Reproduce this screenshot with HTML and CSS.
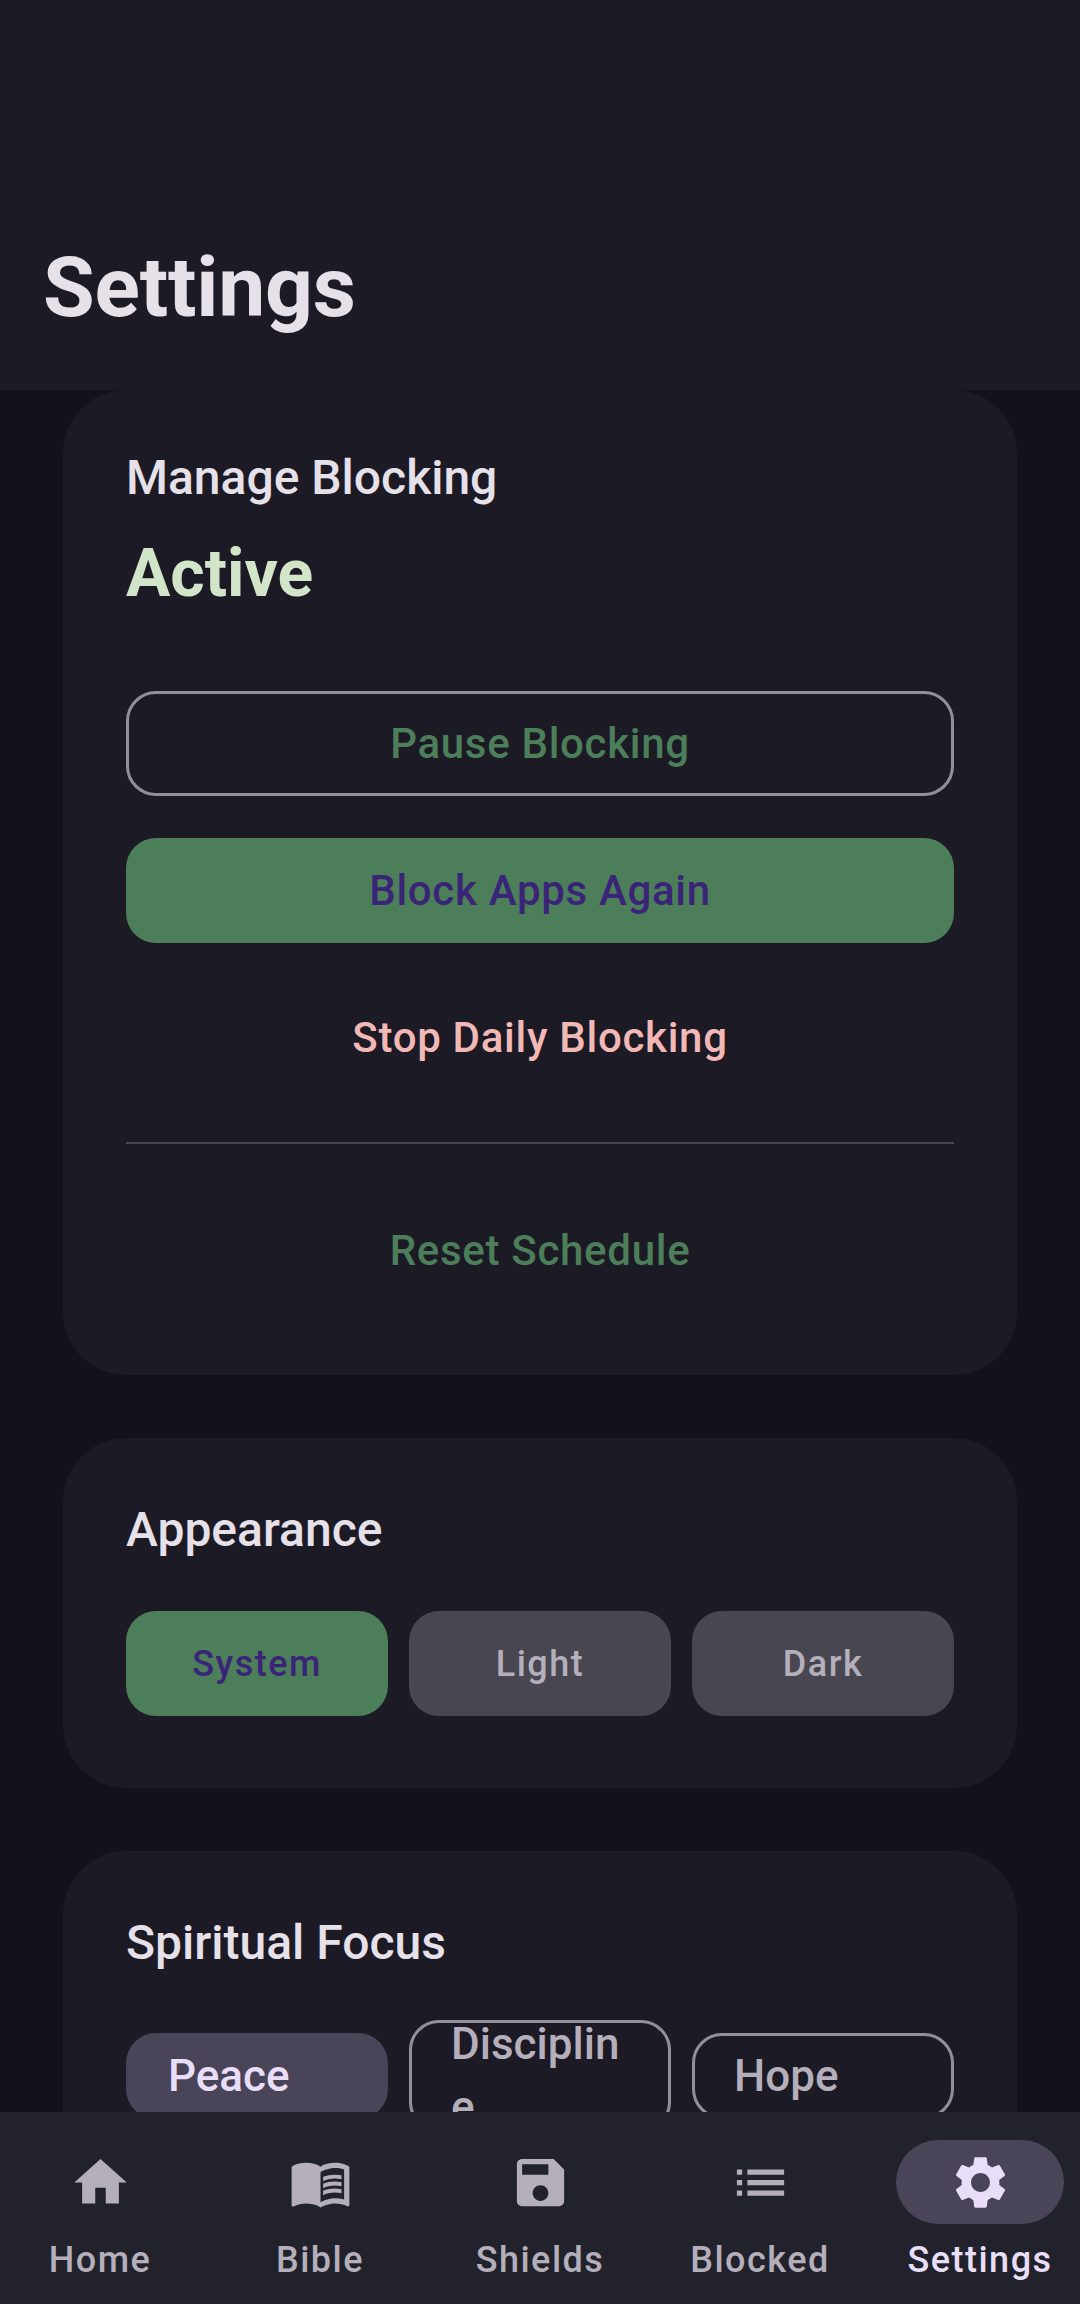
FILE: index.html
```html
<!DOCTYPE html>
<html lang="en">
<head>
  <meta charset="UTF-8" />
  <title>Settings</title>
  <link rel="stylesheet" href="styles.css">
</head>
<body>
  <div class="screen">
    <header class="top-bar">
      <h1>Settings</h1>
    </header>

    <main class="content">
      <section class="card card-manage">
        <h2>Manage Blocking</h2>
        <div class="status">Active</div>
        <button class="btn btn-outline">Pause Blocking</button>
        <button class="btn btn-filled">Block Apps Again</button>
        <button class="btn btn-text btn-danger">Stop Daily Blocking</button>
        <div class="divider"></div>
        <button class="btn btn-text btn-green">Reset Schedule</button>
      </section>

      <section class="card card-appearance">
        <h2>Appearance</h2>
        <div class="segments">
          <button class="seg seg-on">System</button>
          <button class="seg">Light</button>
          <button class="seg">Dark</button>
        </div>
      </section>

      <section class="card card-focus">
        <h2>Spiritual Focus</h2>
        <div class="chips">
          <div class="chip chip-on">Peace</div>
          <div class="chip chip-wrap"><div>Disciplin<br>e</div></div>
          <div class="chip">Hope</div>
        </div>
      </section>
    </main>

    <nav class="bottom-nav">
      <div class="nav-item">
        <div class="nav-icon">
          <svg viewBox="0 0 24 24" width="63" height="63"><path d="M10 20v-6h4v6h5v-8h3L12 3 2 12h3v8z"/></svg>
        </div>
        <span>Home</span>
      </div>
      <div class="nav-item">
        <div class="nav-icon">
          <svg viewBox="0 0 24 24" width="63" height="63"><path d="M21 5c-1.11-.35-2.33-.5-3.5-.5-1.95 0-4.05.4-5.5 1.5-1.45-1.1-3.55-1.5-5.5-1.5S2.45 4.9 1 6v14.65c0 .25.25.5.5.5.1 0 .15-.05.25-.05C3.1 20.45 5.05 20 6.5 20c1.95 0 4.05.4 5.5 1.5 1.35-.85 3.8-1.5 5.5-1.5 1.65 0 3.35.3 4.75 1.05.1.05.15.05.25.05.25 0 .5-.25.5-.5V6c-.6-.45-1.25-.75-2-1zm0 13.5c-1.1-.35-2.3-.5-3.5-.5-1.7 0-4.15.65-5.5 1.5V8c1.35-.85 3.8-1.5 5.5-1.5 1.2 0 2.4.15 3.5.5v11.5z"/><path d="M17.5 10.5c.88 0 1.73.09 2.5.26V9.24c-.79-.15-1.64-.24-2.5-.24-1.7 0-3.24.29-4.5.83v1.66c1.13-.64 2.7-.99 4.5-.99zM13 12.49v1.66c1.13-.64 2.7-.99 4.5-.99.88 0 1.73.09 2.5.26V11.9c-.79-.15-1.64-.24-2.5-.24-1.7 0-3.24.3-4.5.83zM17.5 14.33c-1.7 0-3.24.29-4.5.83v1.66c1.13-.64 2.7-.99 4.5-.99.88 0 1.73.09 2.5.26v-1.52c-.79-.16-1.64-.24-2.5-.24z"/></svg>
        </div>
        <span>Bible</span>
      </div>
      <div class="nav-item">
        <div class="nav-icon">
          <svg viewBox="0 0 24 24" width="63" height="63"><path d="M17 3H5c-1.11 0-2 .9-2 2v14c0 1.1.89 2 2 2h14c1.1 0 2-.9 2-2V7l-4-4zm-5 16c-1.66 0-3-1.34-3-3s1.34-3 3-3 3 1.34 3 3-1.34 3-3 3zm3-10H5V5h10v4z"/></svg>
        </div>
        <span>Shields</span>
      </div>
      <div class="nav-item">
        <div class="nav-icon">
          <svg viewBox="0 0 24 24" width="63" height="63"><path d="M3 13h2v-2H3v2zm0 4h2v-2H3v2zm0-8h2V7H3v2zm4 4h14v-2H7v2zm0 4h14v-2H7v2zM7 7v2h14V7H7z"/></svg>
        </div>
        <span>Blocked</span>
      </div>
      <div class="nav-item nav-on">
        <div class="nav-icon">
          <svg viewBox="0 0 24 24" width="63" height="63"><path d="M19.14 12.94c.04-.3.06-.61.06-.94 0-.32-.02-.64-.07-.94l2.03-1.58c.18-.14.23-.41.12-.61l-1.92-3.32c-.12-.22-.37-.29-.59-.22l-2.39.96c-.5-.38-1.03-.7-1.62-.94l-.36-2.54c-.04-.24-.24-.41-.48-.41h-3.84c-.24 0-.43.17-.47.41l-.36 2.54c-.59.24-1.13.57-1.62.94l-2.39-.96c-.22-.08-.47 0-.59.22L2.74 8.87c-.12.21-.08.47.12.61l2.03 1.58c-.05.3-.09.63-.09.94s.02.64.07.94l-2.03 1.58c-.18.14-.23.41-.12.61l1.92 3.32c.12.22.37.29.59.22l2.39-.96c.5.38 1.03.7 1.62.94l.36 2.54c.05.24.24.41.48.41h3.84c.24 0 .44-.17.47-.41l.36-2.54c.59-.24 1.13-.56 1.62-.94l2.39.96c.22.08.47 0 .59-.22l1.92-3.32c.12-.22.07-.47-.12-.61l-2.01-1.58zM12 15.6c-1.98 0-3.6-1.62-3.6-3.6s1.62-3.6 3.6-3.6 3.6 1.62 3.6 3.6-1.62 3.6-3.6 3.6z"/></svg>
        </div>
        <span>Settings</span>
      </div>
    </nav>
  </div>
</body>
</html>
```

FILE: styles.css
```css
* {
  box-sizing: border-box;
}

html, body {
  margin: 0;
  padding: 0;
}

body {
  background-color: #13121a;
  font-family: Roboto, "Noto Sans", sans-serif;
  color: #e6e0e9;
}

.screen {
  width: 1080px;
  height: 2304px;
  display: flex;
  flex-direction: column;
  overflow: hidden;
}

.top-bar {
  height: 390px;
  flex: none;
  background-color: #1b1a25;
  padding: 240px 43px 0;
}

h1 {
  margin: 0;
  font-size: 84px;
  line-height: 96px;
  font-weight: 700;
  letter-spacing: -0.2px;
  color: #e6e0e9;
}

.content {
  flex: 1;
  min-height: 0;
  overflow: hidden;
  padding: 0 63px;
  display: flex;
  flex-direction: column;
  gap: 63px;
}

.card {
  flex: none;
  background-color: #1b1a25;
  border-radius: 63px;
  padding: 64px 63px 63px;
}

h2 {
  margin: 0;
  font-size: 48px;
  line-height: 56px;
  font-weight: 500;
  color: #e6e0e9;
}

.card-manage {
  height: 985px;
  padding-top: 60px;
}

.status {
  margin-top: 29px;
  font-size: 66px;
  line-height: 78px;
  font-weight: 700;
  color: #d2e5c8;
}

.btn {
  display: block;
  width: 100%;
  height: 105px;
  border: none;
  border-radius: 30px;
  background: none;
  font-family: inherit;
  font-size: 42px;
  font-weight: 500;
  letter-spacing: 0.7px;
  padding: 0;
}

.btn-outline {
  margin-top: 78px;
  border: 3px solid #938f99;
  color: #4c7e59;
}

.btn-filled {
  margin-top: 42px;
  background-color: #4c7e59;
  color: #3a2478;
}

.btn-danger {
  margin-top: 42px;
  color: #f2b8b5;
}

.divider {
  margin-top: 52px;
  height: 2px;
  background-color: #49454f;
}

.btn-green {
  margin-top: 54px;
  color: #4c7e59;
}

.card-appearance {
  height: 350px;
}

.segments {
  margin-top: 53px;
  display: grid;
  grid-template-columns: repeat(3, 1fr);
  gap: 21px;
}

.seg {
  height: 105px;
  border: none;
  border-radius: 30px;
  background-color: #484650;
  color: #b4afba;
  font-family: inherit;
  font-size: 36px;
  font-weight: 500;
  letter-spacing: 1.5px;
  padding: 0;
}

.seg-on {
  background-color: #4c7e59;
  color: #3a2478;
}

.chips {
  margin-top: 49px;
  display: grid;
  grid-template-columns: repeat(3, 1fr);
  gap: 21px;
  align-items: center;
}

.chip {
  height: 86px;
  border-radius: 30px;
  border: 3px solid #938f99;
  padding: 0 39px;
  display: flex;
  align-items: center;
  font-size: 44px;
  font-weight: 500;
  line-height: 63px;
  color: #b4afba;
}

.chip-on {
  border: none;
  padding: 0 42px;
  background-color: #4a4458;
  color: #e8def8;
}

.chip-wrap {
  height: 112px;
}

.bottom-nav {
  flex: none;
  height: 192px;
  background-color: #21222c;
  display: grid;
  grid-template-columns: repeat(5, 200px);
  column-gap: 20px;
}

.nav-item {
  display: flex;
  flex-direction: column;
  align-items: center;
  padding-top: 28px;
  color: #b4afba;
}

.nav-icon {
  width: 168px;
  height: 84px;
  border-radius: 42px;
  display: flex;
  align-items: center;
  justify-content: center;
}

.nav-icon svg {
  fill: currentColor;
  display: block;
}

.nav-item span {
  margin-top: 14px;
  font-size: 36px;
  line-height: 44px;
  font-weight: 500;
  letter-spacing: 1.5px;
}

.nav-on .nav-icon {
  background-color: #4a4458;
  color: #e8def8;
}

.nav-on span {
  color: #e8def8;
}
```
